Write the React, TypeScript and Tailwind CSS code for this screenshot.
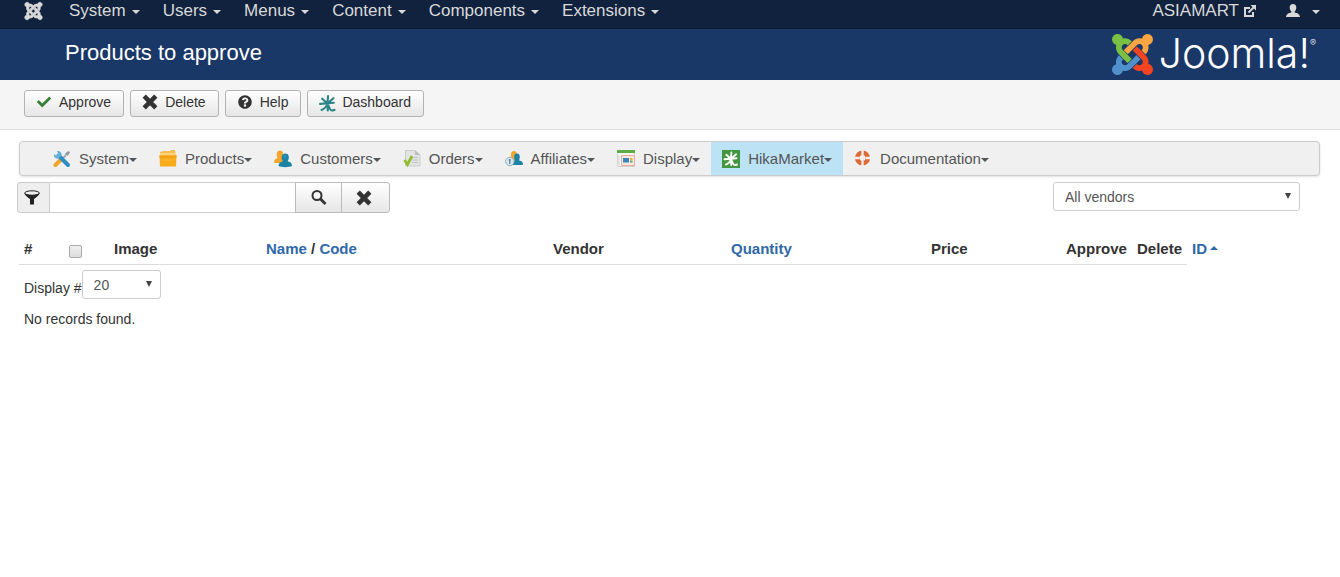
import type { ReactNode } from 'react';
import { FaCheck, FaJoomla, FaQuestionCircle } from 'react-icons/fa';

const Caret = ({ className = '' }: { className?: string }) => (
    <svg viewBox="0 0 8 4" className={`h-1 w-2 shrink-0 fill-current ${className}`} aria-hidden="true">
        <path d="M0 0h8L4 4z" />
    </svg>
);

const JoomlaMark = () => (
    <svg viewBox="0 32 448 448" className="h-[41px] w-[41px] shrink-0" aria-hidden="true">
        <path fill="#5091cd" d="M312.1 307.6l-44-44.3c-87 86.4-50.4 50.4-99.7 99.8-14.3 14.3-37.6 14.3-51.9 0-13.1-13.4-16.9-35.3 3.2-55.4l-44-44.3c-30.2 30.2-38 65.2-29.5 98.3-26.7 6-46.2 29.9-46.2 58.2C0 453.2 26.8 480 59.8 480c28.6 0 52.5-19.8 58.6-46.7 32.7 8.2 68.5-.6 94.2-26 32.1-32 12.2-12.4 99.5-99.7z" />
        <path fill="#f44321" d="M396.4 360.7c8.2-32.7-.9-68.5-26.3-93.9-11.8-12.2 5-3.1-99.7-99.3l-44.3 44.3 99.7 99.4c14.3 14.3 14.3 37.6 0 51.9-12.8 12.8-35 17-55.4-3.5l-44 44.3c27.6 30.2 68 38.8 102.7 28 5.5 27.4 29.7 48.1 58.9 48.1 33 0 59.8-26.8 59.8-60.1 0-30.2-22.5-55-51.4-59.2z" />
        <path fill="#f9a541" d="M130.1 208.5l44.3 44.3c10-10 89.7-89.7 99.7-99.8 14.3-14.3 37.6-14.3 51.9 0 12.8 12.8 17 35-3.5 55.4l44 44.3c31.2-31.2 38.5-67.6 28.9-101.2 29.2-4.1 51.9-29.2 51.9-59.5 0-33.2-26.8-60.1-59.8-60.1-30.3 0-55.4 22.5-59.5 51.6-33.8-9.9-71.7-1.5-98.3 25.1-18.3 19.1-71.1 71.5-99.6 99.9z" />
        <path fill="#7ac143" d="M.6 92.1C.6 58.8 27.4 32 60.4 32c30 0 54.5 21.9 59.2 50.2 32.6-7.6 67.1.6 96.5 30l-44.3 44.3c-20.5-20.5-42.6-16.3-55.4-3.5-14.3 14.3-14.3 37.9 0 52.2l99.5 99.5-44 44.3c-87.7-87.2-49.7-49.7-99.8-99.7-26.8-26.5-35-64.8-24.8-98.9C20.4 144.6.6 120.7.6 92.1z" />
    </svg>
);

const ExternalIcon = () => (
    <svg viewBox="0 0 12 12" className="h-3 w-3" fill="none" stroke="currentColor" strokeWidth="2" aria-hidden="true">
        <path d="M6 3H1v8h8V7" />
        <path d="M4.5 7.5L9.5 2.5" />
        <path d="M6.5 0H12v5.5z" fill="currentColor" stroke="none" />
    </svg>
);

const UserIcon = () => (
    <svg viewBox="0 0 14 13" className="h-[13px] w-3.5" fill="currentColor" aria-hidden="true">
        <path d="M7 0C4.9 0 3.7 1.5 3.7 3.4c0 1.5.6 3.2 1.7 4v1C2.7 8.900.3 9.900 0 13h14c-.3-3.100-2.700-4.100-5.400-4.600v-1c1.100-.8 1.700-2.500 1.700-4C10.300 1.500 9.100 0 7 0z" />
    </svg>
);

const CrossIcon = () => (
    <svg viewBox="0 0 16 16" className="h-4 w-4 shrink-0" stroke="currentColor" strokeWidth="4.6" aria-hidden="true">
        <path d="M2.2 2.2l11.600 11.600M13.800 2.200L2.200 13.800" />
    </svg>
);

const SearchIcon = () => (
    <svg viewBox="0 0 16 16" className="h-4 w-4" fill="none" stroke="currentColor" aria-hidden="true">
        <circle cx="6" cy="5.500" r="4.500" strokeWidth="2" />
        <path d="M9 8.500l5.500 5.500" strokeWidth="2.800" />
    </svg>
);

const FilterIcon = () => (
    <svg viewBox="0 0 16 16" className="h-4 w-4" aria-hidden="true">
        <path d="M.5 3.200C.5 5 4 7.500 6 9v5.500h4V9c2-1.500 5.500-4 5.500-5.800z" fill="#222" />
        <ellipse cx="8" cy="3" rx="7.300" ry="2.200" fill="#eee" stroke="#222" strokeWidth="1" />
    </svg>
);

// the hika "light" sign, shared by the toolbar and the menu
const HikaStrokes = () => (
    <path
        fill="none"
        strokeWidth="2"
        strokeLinecap="round"
        d="M8.500 1L8 7.500M3 3.500L8 8l5.500-5M1 8.300l13-1M8 8c-1 3-2.500 5-5.500 6M8 8l.3 6.500M8 8c1.500 2.500 2 6 3.500 6.300 1 .2 2.500.2 3-.3"
    />
);

const DashboardIcon = () => (
    <svg viewBox="0 0 16 16" className="mt-1 h-[17px] w-[17px] shrink-0 stroke-[#2b8588]" aria-hidden="true">
        <HikaStrokes />
    </svg>
);

const menuSvg = 'h-[18px] w-[18px] shrink-0';

const ToolsIcon = () => (
    <svg viewBox="0 0 18 18" className={menuSvg} aria-hidden="true">
        <path d="M2.500 15l5-5" stroke="#f0a52c" strokeWidth="4" strokeLinecap="round" />
        <path d="M8 10l5-5" stroke="#9aa7af" strokeWidth="1.800" />
        <path d="M12 3.500L15.500 1 17 2.500 14.500 6z" fill="#8d9ba3" />
        <path d="M5.500 5.500l9.500 9.500" stroke="#2f8fc4" strokeWidth="4" strokeLinecap="round" />
        <path d="M1 4.200l2.500 1.200 1.800-1.900L4 1c2.500-.6 5 1.200 4.700 4.300L5.300 8.600C2.500 9 .5 7 1 4.200z" fill="#62afd8" />
    </svg>
);

const BoxIcon = () => (
    <svg viewBox="0 0 18 18" className={menuSvg} aria-hidden="true">
        <path d="M1 2l4-1h6l1-1h4l1 7H1z" fill="#f5bd52" />
        <path d="M1 3h15.500v4H1z" fill="#fbd47e" />
        <path d="M.5 5.500h17l-.5 11H1z" fill="#f8ac1a" />
        <path d="M.5 5.500h17V8H.5z" fill="#f2a114" />
        <path d="M3 9.500h10v1H3z" fill="#fbb93a" />
    </svg>
);

const CustomersIcon = () => (
    <svg viewBox="0 0 18 18" className={menuSvg} aria-hidden="true">
        <path d="M0 13c0-3 1-4 3.500-5C2 5 2.500.5 6 .5S10 5 8.500 8c2 1 3 2.500 3 5z" fill="#f4a52c" />
        <path d="M4.500 16c0-3 1.500-4 4.500-4.800C6.800 8 7.500 3.500 11.300 3.500s4.500 4.500 2.300 7.700c3 .8 4.400 1.800 4.400 4.800-3 1.500-10.500 1.500-13.500 0z" fill="#1d83a4" />
        <circle cx="11" cy="6.500" r="1.800" fill="#2b92b1" />
    </svg>
);

const OrdersIcon = () => (
    <svg viewBox="0 0 18 18" className={menuSvg} aria-hidden="true">
        <path d="M2.500.5h9.500L17 5v11H2.500z" fill="#e3e4e4" stroke="#c9cbcb" />
        <path d="M12 .5V5h5z" fill="#babdbd" />
        <path d="M8 7.500h7M9 10h6M9 12.500h6" stroke="#bfc3c3" />
        <path d="M1.500 10l3 4.500L9 6" fill="none" stroke="#90bd2b" strokeWidth="2.800" />
    </svg>
);

const AffiliatesIcon = () => (
    <svg viewBox="0 0 18 18" className={menuSvg} aria-hidden="true">
        <path d="M5 10C6 8 6 6 6 4c0-4 6-4 6 0v7z" fill="#f4a52c" />
        <path d="M7 15c0-3 1-4 3-4.500C8.500 7 9 3.500 12 3.500s3.500 3.500 2 7c3 .5 4 1.500 4 4.500z" fill="#1d83a4" />
        <circle cx="4.800" cy="11.500" r="4.200" fill="#dbe7ee" stroke="#93adbc" />
        <path d="M4.800 9v5M3.800 10h2" stroke="#49809d" strokeWidth="1.200" />
    </svg>
);

const DisplayIcon = () => (
    <svg viewBox="0 0 18 18" className={menuSvg} aria-hidden="true">
        <path d="M.5 1.500h17v15H.5z" fill="#f5f5f2" stroke="#cfd3cd" />
        <path d="M0 0h18v3H0z" fill="#5dab48" />
        <path d="M4.500 5.500h13v10h-13z" fill="#f5e8de" stroke="#efaaa0" />
        <path d="M6 8h6v4.500H6z" fill="#3884bd" />
        <path d="M13 8h2.500v2H13z" fill="#e9b73d" />
        <path d="M13 10.500h2.500v2H13z" fill="#62a95a" />
        <path d="M2 6v9" stroke="#d3d5d3" />
    </svg>
);

const HikaMarketIcon = () => (
    <svg viewBox="0 0 18 18" className={`${menuSvg} stroke-white`} aria-hidden="true">
        <path d="M0 0h18v18H0z" fill="#41963f" stroke="none" />
        <g transform="translate(1.500 1.500) scale(.93)">
            <HikaStrokes />
        </g>
    </svg>
);

const LifebuoyIcon = () => (
    <svg viewBox="0 0 18 18" className={menuSvg} aria-hidden="true">
        <circle cx="8.500" cy="8" r="5.300" fill="none" stroke="#dd6a36" strokeWidth="4.600" />
        <path d="M8.500 0v5M8.500 11v5.500M0 8h5.500M11.500 8H17" stroke="#f7ece6" strokeWidth="2.400" />
    </svg>
);

const topMenu = ['System', 'Users', 'Menus', 'Content', 'Components', 'Extensions'];

const toolbar: { label: string; icon: ReactNode }[] = [
    { label: 'Approve', icon: <FaCheck className="h-3.5 w-3.5 text-[#378137]" /> },
    { label: 'Delete', icon: <CrossIcon /> },
    { label: 'Help', icon: <FaQuestionCircle className="h-3.5 w-3.5" /> },
    { label: 'Dashboard', icon: <DashboardIcon /> },
];

const hikaMenu: { label: string; icon: ReactNode; active?: boolean }[] = [
    { label: 'System', icon: <ToolsIcon /> },
    { label: 'Products', icon: <BoxIcon /> },
    { label: 'Customers', icon: <CustomersIcon /> },
    { label: 'Orders', icon: <OrdersIcon /> },
    { label: 'Affiliates', icon: <AffiliatesIcon /> },
    { label: 'Display', icon: <DisplayIcon /> },
    { label: 'HikaMarket', icon: <HikaMarketIcon />, active: true },
    { label: 'Documentation', icon: <LifebuoyIcon /> },
];

const Select = ({ id, label, options, className }: { id: string; label?: string; options: string[]; className: string }) => (
    <div className={`relative ${className}`}>
        <select
            id={id}
            aria-label={label}
            className="h-[29px] w-full appearance-none rounded-[3px] border border-[#ccc] bg-white pr-6 pl-[11px] text-[#555]"
        >
            {options.map((option) => (
                <option key={option}>{option}</option>
            ))}
        </select>
        <svg viewBox="0 0 6 6" className="pointer-events-none absolute top-[11px] right-[9px] h-1.5 w-1.5 fill-[#444]" aria-hidden="true">
            <path d="M0 0h6L3 6z" />
        </svg>
    </div>
);

const TopBar = () => (
    <nav className="flex h-[29px] items-start justify-between border-b border-[#0b1a2e] bg-[#10223e] pr-5 pl-6 text-[17px] leading-[21px] text-[#d9d9d9]">
        <div className="flex items-center">
            <a href="#" aria-label="Joomla">
                <FaJoomla className="h-5 w-[19px] stroke-[#d9d9d9] stroke-[16px]" />
            </a>
            <ul className="ml-[26px] flex gap-[23px]">
                {topMenu.map((item) => (
                    <li key={item}>
                        <a href="#" className="flex items-center gap-1.5">
                            {item}
                            <Caret className="mt-0.5" />
                        </a>
                    </li>
                ))}
            </ul>
        </div>
        <div className="flex items-center gap-[30px]">
            <a href="#" className="flex items-center gap-[5px]">
                ASIAMART
                <ExternalIcon />
            </a>
            <a href="#" aria-label="User menu" className="flex items-center gap-3">
                <UserIcon />
                <Caret className="mt-0.5" />
            </a>
        </div>
    </nav>
);

const Header = () => (
    <header className="flex h-[51px] items-center justify-between bg-[#1a3867] pr-6 pl-[65px] text-white">
        <h1 className="pb-1 text-[22px] leading-6">Products to approve</h1>
        <div className="flex items-center gap-1.5">
            <JoomlaMark />
            <div className="flex items-start pb-1 font-[Inter,sans-serif] text-[41px] leading-10 font-light">
                Joomla!
                <span className="pt-1 text-[9px] leading-3">®</span>
            </div>
        </div>
    </header>
);

const Toolbar = () => (
    <div className="flex h-[50px] items-start gap-1.5 border-b border-[#ddd] bg-[#f5f5f5] px-6 pt-2.5">
        {toolbar.map(({ label, icon }) => (
            <button
                key={label}
                type="button"
                className="flex h-[27px] items-center gap-2 rounded-[3px] border border-[#b3b3b3] bg-linear-to-b from-white to-[#e6e6e6] px-3 pb-1 text-[#333]"
            >
                <span className="flex w-3.5 justify-center">{icon}</span>
                {label}
            </button>
        ))}
    </div>
);

const HikaMenu = () => (
    <nav className="mr-5 rounded border border-[#ccc] bg-[#f0f0f0] pl-[22px] shadow-sm">
        <ul className="flex text-[15px] text-[#555]">
            {hikaMenu.map(({ label, icon, active }) => (
                <li key={label} className={active ? 'bg-[#bce3f5]' : ''}>
                    <a href="#" className="flex h-[33px] items-center px-[11px]">
                        {icon}
                        <span className="ml-2">{label}</span>
                        <Caret className="mt-0.5" />
                    </a>
                </li>
            ))}
        </ul>
    </nav>
);

const Filters = () => (
    <div className="mt-1.5 flex items-start justify-between pr-10">
        <form className="-ml-0.5 flex h-[31px]" onSubmit={(e) => e.preventDefault()}>
            <label htmlFor="search" aria-label="Filter" className="flex w-[33px] items-center justify-center rounded-l-[3px] border border-[#ccc] bg-[#eee] pr-1">
                <FilterIcon />
            </label>
            <input id="search" type="text" className="w-[245px] border-y border-[#ccc] bg-white px-2" />
            <button type="submit" aria-label="Search" className="flex w-[47px] items-center justify-center border border-[#bbb] bg-linear-to-b from-white to-[#e6e6e6] text-[#333]">
                <SearchIcon />
            </button>
            <button type="button" aria-label="Clear" className="-ml-px flex w-[49px] items-center justify-center rounded-r-[3px] border border-[#bbb] bg-linear-to-b from-white to-[#e6e6e6] pr-1 text-[#333]">
                <CrossIcon />
            </button>
        </form>
        <Select id="vendor" label="Vendor" options={['All vendors']} className="w-[247px]" />
    </div>
);

const th = 'border-b border-[#ddd] px-[5px] pb-[5px] leading-5';
const sortLink = 'text-[#2f69a8]';

const Products = () => (
    <>
        <table className="mt-[26px] w-full table-fixed text-left text-[15px] text-[#333]">
            <thead>
                <tr>
                    <th className={`w-[45px] ${th}`}>#</th>
                    <th className={`w-[45px] ${th}`}>
                        <input
                            type="checkbox"
                            aria-label="Check all"
                            className="mt-1 block h-[13px] w-[13px] appearance-none rounded-[2px] border border-[#aaa] bg-linear-to-b from-[#eee] to-[#ddd]"
                        />
                    </th>
                    <th className={`w-[152px] ${th}`}>Image</th>
                    <th className={`w-[287px] ${th}`}>
                        <a href="#" className={sortLink}>Name</a> / <a href="#" className={sortLink}>Code</a>
                    </th>
                    <th className={`w-[178px] ${th}`}>Vendor</th>
                    <th className={`w-[200px] ${th}`}>
                        <a href="#" className={sortLink}>Quantity</a>
                    </th>
                    <th className={`w-[135px] ${th}`}>Price</th>
                    <th className={`w-[71px] ${th}`}>Approve</th>
                    <th className={`w-[55px] ${th}`}>Delete</th>
                    <th className="px-[5px] pb-[5px] leading-5">
                        <a href="#" className={`flex items-center gap-[3px] ${sortLink}`}>
                            ID
                            <Caret className="mb-0.5 rotate-180" />
                        </a>
                    </th>
                </tr>
            </thead>
        </table>
        <div className="px-[5px] pt-[5px] text-[#333]">
            <div className="flex items-end">
                <label htmlFor="limit" className="pb-px">Display #</label>
                <Select id="limit" options={['20', '50', '100']} className="w-[79px]" />
            </div>
            <p className="mt-2.5">No records found.</p>
        </div>
    </>
);

const App = () => {
    return (
        <div className="min-h-screen bg-white font-['Liberation_Sans',Arial,sans-serif] text-sm">
            <TopBar />
            <Header />
            <Toolbar />
            <main className="pt-[11px] pl-[19px]">
                <HikaMenu />
                <Filters />
                <Products />
            </main>
        </div>
    );
};

export default App;
